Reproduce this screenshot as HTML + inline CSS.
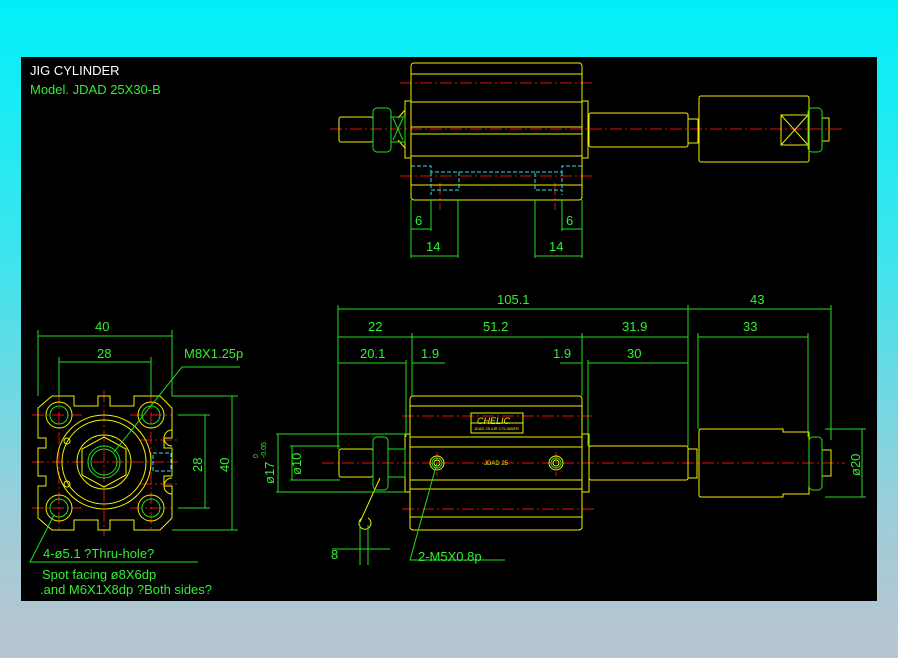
<!DOCTYPE html>
<html><head><meta charset="utf-8"><style>
html,body{margin:0;padding:0;width:898px;height:658px;overflow:hidden;background:linear-gradient(#00f0f8 0%,#40e4ec 40%,#a0ccd8 80%,#b8c4d0 100%);}
svg{position:absolute;left:0;top:0}
text{font-family:"Liberation Sans",sans-serif;font-size:13px}
</style></head><body>
<svg width="898" height="658" viewBox="0 0 898 658">
<rect x="21" y="57" width="856" height="544" fill="#000"/>
<g fill="none" stroke-width="1">
<g stroke="#e01010" stroke-dasharray="12,3,2,3">
<line x1="330" y1="129" x2="843" y2="129"/><line x1="400" y1="83" x2="592" y2="83"/><line x1="400" y1="176" x2="592" y2="176"/>
<line x1="440" y1="183" x2="440" y2="210"/><line x1="555" y1="183" x2="555" y2="210"/>
<line x1="322" y1="463" x2="845" y2="463"/><line x1="402" y1="416" x2="592" y2="416"/><line x1="402" y1="509" x2="594" y2="509"/>
<line x1="437" y1="452" x2="437" y2="476"/><line x1="556" y1="452" x2="556" y2="476"/>
<line x1="32" y1="462" x2="178" y2="462"/><line x1="104" y1="390" x2="104" y2="536"/>
<line x1="32" y1="415" x2="82" y2="415"/><line x1="130" y1="415" x2="172" y2="415"/><line x1="32" y1="508" x2="82" y2="508"/><line x1="130" y1="508" x2="172" y2="508"/>
<line x1="59" y1="392" x2="59" y2="532"/><line x1="151" y1="392" x2="151" y2="532"/>
<line x1="140" y1="440" x2="180" y2="440"/><line x1="140" y1="484" x2="180" y2="484"/>
</g>
<g stroke="#f0f000">
<rect x="411" y="63" width="171" height="137" rx="3"/>
<line x1="411" y1="74" x2="582" y2="74"/><line x1="411" y1="102" x2="582" y2="102"/><line x1="411" y1="127" x2="582" y2="127"/><line x1="411" y1="134" x2="582" y2="134"/><line x1="411" y1="156" x2="582" y2="156"/><line x1="411" y1="185" x2="582" y2="185"/>
<rect x="405" y="101" width="6" height="57"/><rect x="582" y="101" width="6" height="57"/>
<rect x="339" y="117" width="34" height="25" rx="2"/>
<path d="M398 118 L405 110 M398 140 L405 148"/>
<rect x="589" y="113" width="99" height="34" rx="2"/><rect x="688" y="119" width="10" height="24"/>
<rect x="699" y="96" width="110" height="66" rx="2"/>
<rect x="781" y="115" width="27" height="30"/><path d="M781 115 L808 145 M808 115 L781 145"/>
<rect x="822" y="118" width="7" height="23"/>
<rect x="410" y="396" width="172" height="134" rx="3"/>
<line x1="410" y1="406" x2="582" y2="406"/><line x1="410" y1="437" x2="582" y2="437"/><line x1="410" y1="447" x2="582" y2="447"/><line x1="410" y1="480" x2="582" y2="480"/><line x1="410" y1="489" x2="582" y2="489"/><line x1="410" y1="517" x2="582" y2="517"/>
<rect x="405" y="434" width="5" height="58"/><rect x="582" y="434" width="7" height="58"/>
<rect x="589" y="446" width="99" height="34" rx="2"/><rect x="688" y="449" width="9" height="29"/>
<path d="M701 429 H783 V432 H809 V494 H783 V497 H701 Q699 497 699 495 V431 Q699 429 701 429Z"/>
<rect x="822" y="450" width="9" height="26"/>
<rect x="339" y="449" width="34" height="28" rx="2"/>
<rect x="471" y="413" width="52" height="20"/><line x1="471" y1="423" x2="523" y2="423"/>
<circle cx="437" cy="463" r="7"/><circle cx="556" cy="463" r="7"/>
<circle cx="437" cy="463" r="3"/><circle cx="556" cy="463" r="3"/>
<path d="M360 522 L380 478"/><path d="M362 518 a6 6 0 1 0 6 0" />
<path d="M52 396 H74 V406 H98 V396 H110 V406 H134 V396 H160 L172 408 V438 H164 V448 H172 V476 H164 V486 H172 V518 L160 530 H134 V520 H110 V530 H98 V520 H74 V530 H52 L38 518 V486 H46 V476 H38 V448 H46 V438 H38 V408 Z"/>
<circle cx="104" cy="462" r="47"/><circle cx="104" cy="462" r="42"/>
<circle cx="104" cy="462" r="27"/>
<path d="M104 437 L126 449 L126 475 L104 487 L82 475 L82 449 Z"/>
<circle cx="59" cy="415" r="13"/><circle cx="151" cy="415" r="13"/><circle cx="59" cy="508" r="13"/><circle cx="151" cy="508" r="13"/>
<circle cx="67" cy="441" r="3"/><circle cx="67" cy="484" r="3"/>
<path d="M172 430 a8 8 0 0 0 0 16 M172 478 a8 8 0 0 0 0 16"/>
</g>
<text x="477" y="424" fill="#f0f000" style="font-size:9px;font-style:italic">CHELIC</text>
<text x="474" y="430" fill="#f0f000" style="font-size:4px">JDAD 25 AIR CYLINDER</text>
<text x="484" y="465" fill="#f0f000" style="font-size:6px">JDAD 25</text>
<g stroke="#30e0f0" stroke-dasharray="4,2">
<path d="M411 166 H431 V172 H459 V190 H431 V195 M431 172 V190"/>
<path d="M459 172 H535 M582 166 H562 V172 H535 V190 H562 V195 M562 172 V190"/>
<rect x="153" y="453" width="18" height="18"/>
</g>
<g stroke="#20e020">
<rect x="373" y="108" width="18" height="44" rx="4"/><rect x="391" y="117" width="14" height="25"/><path d="M393 118 L403 140 M403 118 L393 140"/>
<rect x="808" y="108" width="14" height="44" rx="4"/>
<rect x="373" y="437" width="15" height="53" rx="4"/><rect x="388" y="449" width="17" height="28"/>
<rect x="809" y="437" width="13" height="53" rx="4"/>
<circle cx="437" cy="463" r="5"/><circle cx="556" cy="463" r="5"/>
<circle cx="59" cy="415" r="9"/><circle cx="151" cy="415" r="9"/><circle cx="59" cy="508" r="9"/><circle cx="151" cy="508" r="9"/>
<circle cx="104" cy="462" r="16"/><circle cx="104" cy="462" r="13"/>
<path d="M411 200 V258 M431 200 V231 M458 200 V258 M535 200 V258 M562 200 V231 M582 200 V258"/>
<path d="M411 229 H431 M562 229 H582 M411 256 H458 M535 256 H582"/>
<path d="M338 305 V449 M688 305 V446 M831 305 V440 M412 333 V396 M406 360 V437 M582 333 V396 M588 360 V446 M698 333 V429 M808 333 V437"/>
<path d="M338 309 H831 M338 337 H688 M698 337 H808 M338 363 H406 M412 363 H445 M560 363 H582 M588 363 H688"/>
<path d="M276 434 H405 M276 492 H405 M290 446 H340 M290 480 H340 M278 434 V492 M292 446 V480"/>
<path d="M825 429 H866 M825 497 H866 M862 429 V497"/>
<path d="M360 525 V565 M368 525 V565 M332 549 H390"/>
<path d="M437 463 L410 560 H505"/>
<path d="M38 330 V396 M172 330 V396 M59 357 V396 M151 357 V396 M38 336 H172 M59 362 H151"/>
<path d="M172 396 H238 M178 415 H210 M178 508 H210 M172 530 H238 M232 396 V530 M205 415 V508"/>
<path d="M114 452 L182 367 H240"/>
<path d="M54 515 L30 562 H198"/>
</g>
<g fill="#30f030">
<text x="415" y="225">6</text><text x="566" y="225">6</text>
<text x="426" y="251">14</text><text x="549" y="251">14</text>
<text x="497" y="304">105.1</text><text x="750" y="304">43</text>
<text x="368" y="331">22</text><text x="483" y="331">51.2</text><text x="622" y="331">31.9</text><text x="743" y="331">33</text>
<text x="360" y="358">20.1</text><text x="421" y="358">1.9</text><text x="553" y="358">1.9</text><text x="627" y="358">30</text>
<text x="95" y="331">40</text><text x="97" y="358">28</text>
<text x="184" y="358">M8X1.25p</text>
<text x="331" y="559">8</text>
<text x="418" y="561">2-M5X0.8p</text>
<text x="43" y="558">4-ø5.1 ?Thru-hole?</text>
<text x="42" y="579">Spot facing  ø8X6dp</text>
<text x="40" y="594">.and M6X1X8dp ?Both sides?</text>
<text transform="translate(202,472) rotate(-90)">28</text>
<text transform="translate(229,472) rotate(-90)">40</text>
<text transform="translate(301,475) rotate(-90)">ø10</text>
<text transform="translate(274,484) rotate(-90)">ø17</text>
<text transform="translate(266,458) rotate(-90)" style="font-size:7px">-0.05</text>
<text transform="translate(258,458) rotate(-90)" style="font-size:7px">0</text>
<text transform="translate(860,476) rotate(-90)">ø20</text>
<text x="30" y="94">Model.  JDAD 25X30-B</text>
</g>
<text x="30" y="75" fill="#ffffff">JIG CYLINDER</text>
</g>
</svg>
</body></html>
